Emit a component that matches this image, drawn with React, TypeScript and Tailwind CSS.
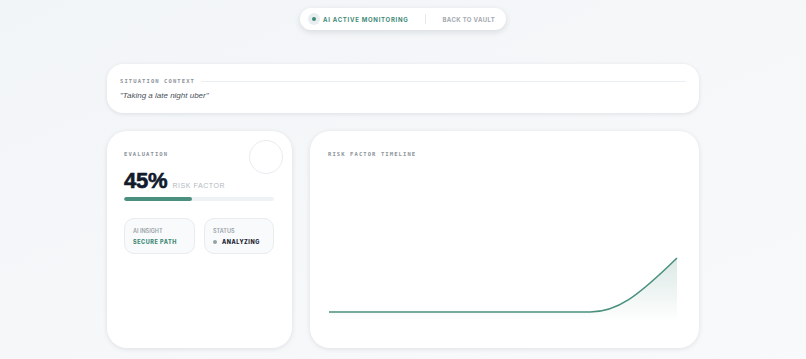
export default function App() {
    return (
        <main className="min-h-screen w-full bg-gradient-to-br from-[#f2f5f7] via-[#f5f7f9] to-[#f8f9fb] font-['Inter',sans-serif] pb-[8px]">
            <div className="flex justify-center pt-2">
                <div className="flex items-center h-[22px] w-[206px] rounded-full bg-white shadow-[0_2px_6px_rgba(15,30,40,0.12)] pl-[8px]">
                    <div className="flex items-center justify-center w-[12px] h-[12px] rounded-full bg-[#e8eef0]">
                        <div className="w-[4px] h-[4px] rounded-full bg-[#3f8a76]"></div>
                    </div>
                    <span className="ml-[3px] text-[6px] font-bold tracking-[0.12em] text-[#3f8a76]">AI ACTIVE MONITORING</span>
                    <div className="ml-[16px] w-px h-[10px] bg-[#e6e9ec]"></div>
                    <span className="ml-[17px] text-[6px] font-bold tracking-[0.06em] text-[#a3a9b0]">BACK TO VAULT</span>
                </div>
            </div>

            <div className="mx-auto w-[592px] mt-[34px]">
                <div className="h-[49px] rounded-[16px] bg-white shadow-[0_1px_4px_rgba(15,30,40,0.1)] px-[13px] pt-[13px]">
                    <div className="flex items-center gap-[6px]">
                        <span className="font-['DejaVu_Sans_Mono',monospace] text-[5.5px] font-bold tracking-[0.2em] text-[#8d949b]">SITUATION CONTEXT</span>
                        <div className="flex-1 h-px bg-[#eceff2]"></div>
                    </div>
                    <p className="mt-[5px] font-['Liberation_Sans',sans-serif] text-[8px] italic text-[#4a5058]">"Taking a late night uber"</p>
                </div>

                <div className="grid grid-cols-[185px_389px] gap-[18px] mt-[18px]">
                    <div className="relative h-[217px] rounded-[20px] bg-white shadow-[0_1px_5px_rgba(15,30,40,0.1)] px-[17px] pt-[19px]">
                        <div className="absolute top-[9px] right-[9px] w-[34px] h-[34px] rounded-full border border-[#e9ecef]"></div>
                        <div className="font-['DejaVu_Sans_Mono',monospace] text-[5.5px] font-bold tracking-[0.2em] text-[#8d949b] leading-[8px]">EVALUATION</div>
                        <div className="flex items-baseline mt-[10px] gap-[5px]">
                            <span className="font-['Liberation_Sans',sans-serif] text-[22px] font-bold tracking-[-0.01em] text-[#121a2c] leading-[26px] [-webkit-text-stroke:0.6px_#121a2c]">45%</span>
                            <span className="font-['Liberation_Sans',sans-serif] text-[7px] tracking-[0.08em] text-[#b3b9bf]">RISK FACTOR</span>
                        </div>
                        <div className="mt-[3px] h-[4px] w-[150px] rounded-full bg-[#eff2f5] overflow-hidden">
                            <div className="h-full w-[45%] rounded-full bg-[#4b907f]"></div>
                        </div>
                        <div className="flex gap-[9px] mt-[17px]">
                            <div className="w-[71px] h-[36px] rounded-[10px] border border-[#e8ecef] bg-[#f8fafb] px-[8px] pt-[9px]">
                                <div className="text-[5.5px] font-semibold text-[#9aa1a8] leading-[7px]">AI INSIGHT</div>
                                <div className="mt-[3px] text-[5.5px] font-extrabold tracking-[0.1em] text-[#3f8a76] leading-[8px]">SECURE PATH</div>
                            </div>
                            <div className="w-[70px] h-[36px] rounded-[10px] border border-[#e8ecef] bg-[#f8fafb] px-[8px] pt-[9px]">
                                <div className="text-[5.5px] font-semibold text-[#9aa1a8] leading-[7px]">STATUS</div>
                                <div className="mt-[3px] flex items-center gap-[5px]">
                                    <div className="w-[4px] h-[4px] rounded-full bg-[#93a3a3]"></div>
                                    <span className="text-[5.5px] font-extrabold tracking-[0.1em] text-[#1b2230] leading-[8px]">ANALYZING</span>
                                </div>
                            </div>
                        </div>
                    </div>

                    <div className="h-[217px] rounded-[20px] bg-white shadow-[0_1px_5px_rgba(15,30,40,0.1)] px-[18px] pt-[19px]">
                        <div className="font-['DejaVu_Sans_Mono',monospace] text-[5.5px] font-bold tracking-[0.2em] text-[#8d949b] leading-[8px]">RISK FACTOR TIMELINE</div>
                        <svg width="352" height="160" viewBox="0 0 352 160" className="mt-[6px] -ml-[1px]">
                            <defs>
                                <linearGradient id="fillg" x1="0" y1="0" x2="0" y2="1">
                                    <stop offset="0%" stopColor="#4b907f" stopOpacity="0.2" />
                                    <stop offset="100%" stopColor="#4b907f" stopOpacity="0" />
                                </linearGradient>
                            </defs>
                            <path d="M2 148 L263 148 C290 148 310 133 350 94 L350 158 L2 158 Z" fill="url(#fillg)" />
                            <path d="M2 148 L263 148 C290 148 310 133 350 94" fill="none" stroke="#4b907f" strokeWidth="1.6" />
                        </svg>
                    </div>
                </div>
            </div>
        </main>
    );
}
